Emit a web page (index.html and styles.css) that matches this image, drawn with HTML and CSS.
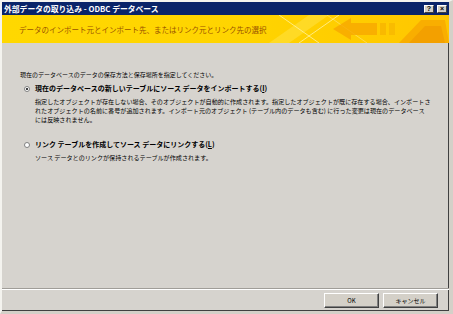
FILE: index.html
```html
<!DOCTYPE html>
<html>
<head>
  <title>外部データの取り込み - ODBC データベース</title>
  <link rel="stylesheet" href="styles.css">
</head>
<body>
  <div class="window">
    <div class="titlebar">
      <span class="title">外部データの取り込み - ODBC データベース</span>
      <span class="tb-buttons">
        <span class="tb-btn">?</span>
        <span class="tb-btn">×</span>
      </span>
    </div>

    <div class="banner">
      <span class="banner-text">データのインポート元とインポート先、またはリンク元とリンク先の選択</span>
      <svg class="banner-art" width="180" height="28" viewBox="0 0 180 28">
        <polygon points="0,28 40,0 60,0 20,28" fill="#ffe34a" opacity="0.5"/>
        <line x1="10" y1="0" x2="50" y2="28" stroke="#fff3a0" stroke-width="0.8"/>
        <line x1="30" y1="28" x2="70" y2="0" stroke="#fff3a0" stroke-width="0.8"/>
        <line x1="58" y1="0" x2="98" y2="28" stroke="#ffe680" stroke-width="0.6"/>
        <polygon points="64,14 82,3 82,8 108,8 108,20 82,20 82,25" fill="#f7a800" opacity="0.8"/>
        <polygon points="111,8 117,8 117,20 111,20" fill="#f8b400" opacity="0.8"/>
        <polygon points="120,8 126,8 126,20 120,20" fill="#f8b800" opacity="0.8"/>
        <polygon points="130,28 152,5 176,5 180,28" fill="#f7a800" opacity="0.8"/>
        <polygon points="140,28 156,11 172,11 176,28" fill="#f29e00" opacity="0.9"/>
      </svg>
    </div>

    <div class="content">
      <p class="intro">現在のデータベースのデータの保存方法と保存場所を指定してください。</p>

      <div class="option">
        <div class="option-head">
          <span class="radio checked"></span>
          <span class="option-label">現在のデータベースの新しいテーブルにソース データをインポートする(<u>I</u>)</span>
        </div>
        <p class="option-desc">指定したオブジェクトが存在しない場合、そのオブジェクトが自動的に作成されます。指定したオブジェクトが既に存在する場合、インポートさ<br>れたオブジェクトの名前に番号が追加されます。インポート元のオブジェクト (テーブル内のデータも含む) に行った変更は現在のデータベース<br>には反映されません。</p>
      </div>

      <div class="option second">
        <div class="option-head">
          <span class="radio"></span>
          <span class="option-label">リンク テーブルを作成してソース データにリンクする(<u>L</u>)</span>
        </div>
        <p class="option-desc">ソース データとのリンクが保持されるテーブルが作成されます。</p>
      </div>
    </div>

    <div class="footer">
      <button class="btn" type="button">OK</button>
      <button class="btn" type="button">キャンセル</button>
    </div>
  </div>
</body>
</html>
```

FILE: styles.css
```css
body {
  margin: 0;
  padding: 0;
  background-color: #d4d0c8;
  font-family: "Noto Sans CJK JP", "Liberation Sans", sans-serif;
}

.window {
  width: 453px;
  height: 314px;
  box-sizing: border-box;
  display: flex;
  flex-direction: column;
  background-color: #d6d3ce;
  border-top: 2px solid #f4f3ef;
  border-left: 2px solid #f4f3ef;
  border-right: 4px solid #d4d0c8;
  border-bottom: 3px solid #d4d0c8;
  box-shadow: inset -1px -1px 0 #404040;
}

.titlebar {
  height: 13px;
  background-color: #0a246a;
  display: flex;
  align-items: center;
  justify-content: space-between;
  padding: 0 2px 0 2px;
}

.title {
  color: white;
  font-size: 7.8px;
  font-weight: bold;
  line-height: 13px;
}

.tb-buttons {
  display: flex;
  gap: 3px;
}

.tb-btn {
  width: 10px;
  height: 8px;
  box-sizing: border-box;
  background-color: #d4d0c8;
  border: 1px solid;
  border-color: #ffffff #404040 #404040 #ffffff;
  font-family: "Liberation Sans", sans-serif;
  font-size: 7px;
  font-weight: bold;
  line-height: 6px;
  text-align: center;
  color: black;
}

.banner {
  position: relative;
  height: 28px;
  display: flex;
  align-items: center;
  padding-left: 17px;
  background: linear-gradient(90deg, #ffd800 0%, #ffd400 55%, #ffc600 100%);
  overflow: hidden;
}

.banner-text {
  color: #9a5200;
  font-size: 7.5px;
  position: relative;
  z-index: 1;
}

.banner-art {
  position: absolute;
  right: 0;
  top: 0;
}

.content {
  flex: 1;
  padding: 27px 0 0 18px;
  font-size: 6px;
  color: black;
}

.intro {
  margin: 0;
  line-height: 9px;
}

.option {
  margin-top: 5px;
  padding-left: 15px;
}

.option.second {
  margin-top: 16px;
}

.option-head {
  display: flex;
  align-items: center;
  margin-left: -11px;
  height: 9px;
}

.radio {
  width: 6px;
  height: 6px;
  box-sizing: border-box;
  border-radius: 50%;
  background-color: white;
  border: 1px solid #808080;
  margin-right: 5px;
  position: relative;
}

.radio.checked::after {
  content: "";
  position: absolute;
  left: 1px;
  top: 1px;
  width: 2px;
  height: 2px;
  border-radius: 50%;
  background-color: black;
}

.option-label {
  font-weight: bold;
  font-size: 7px;
  line-height: 9px;
}

.option-desc {
  margin: 4px 0 0 0;
  font-size: 6.1px;
  line-height: 9px;
  white-space: nowrap;
}

.footer {
  height: 22px;
  border-top: 1px solid #a09d98;
  box-shadow: inset 0 1px 0 #ffffff;
  display: flex;
  justify-content: flex-end;
  align-items: center;
  gap: 4px;
  padding-right: 11px;
}

.btn {
  width: 55px;
  height: 15px;
  padding: 0;
  background-color: #d4d0c8;
  border: 1px solid;
  border-color: #ffffff #404040 #404040 #ffffff;
  box-shadow: inset -1px -1px 0 #808080;
  font-family: "Noto Sans CJK JP", sans-serif;
  font-size: 6px;
  color: black;
}
```
